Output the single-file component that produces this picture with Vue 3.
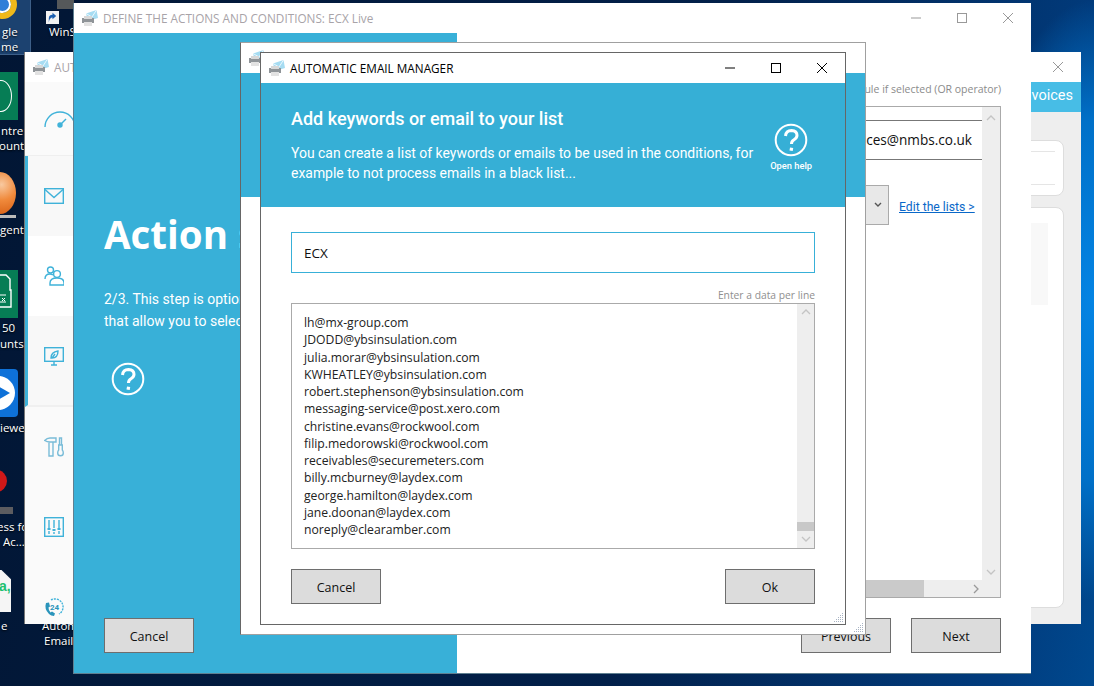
<script setup>
const emails = [
  "lh@mx-group.com",
  "JDODD@ybsinsulation.com",
  "julia.morar@ybsinsulation.com",
  "KWHEATLEY@ybsinsulation.com",
  "robert.stephenson@ybsinsulation.com",
  "messaging-service@post.xero.com",
  "christine.evans@rockwool.com",
  "filip.medorowski@rockwool.com",
  "receivables@securemeters.com",
  "billy.mcburney@laydex.com",
  "george.hamilton@laydex.com",
  "jane.doonan@laydex.com",
  "noreply@clearamber.com",
]

// desktop shortcuts, the place on the wallpaper is the content
const labels = [
  { text: "gle", x: 2, y: 24 },
  { text: "me", x: 1, y: 39 },
  { text: "WinS", x: 49, y: 24 },
  { text: "ntre", x: 1, y: 123 },
  { text: "ounts", x: -1, y: 138 },
  { text: "gent", x: 0, y: 222 },
  { text: "50", x: 2, y: 320 },
  { text: "unts", x: 0, y: 336 },
  { text: "iewer", x: 0, y: 420 },
  { text: "ess fo", x: -3, y: 519 },
  { text: "Ac...", x: 3, y: 534 },
  { text: "e", x: 1, y: 618 },
  { text: "Autom", x: 42, y: 618 },
  { text: "Email", x: 44, y: 633 },
]
</script>

<template>
  <div class="desktop">
    <!-- wallpaper icons -->
    <div class="deskicon picked"></div>
    <div class="deskicon chrome"></div>
    <div class="deskicon thumb"></div>
    <div class="deskicon shortcut">
      <svg width="13" height="13" viewBox="0 0 14 14"><rect width="14" height="14" fill="#f2f2f2" /><path d="M3 12V8q0-4 4-4V2l4 3.500L7 9V7q-3 0-4 5z" fill="#1c5fb0" /></svg>
    </div>
    <div class="deskicon green one"><i class="ring"></i></div>
    <div class="deskicon orange"></div>
    <div class="deskicon plate"></div>
    <div class="deskicon green two">
      <svg width="18" height="48" viewBox="0 0 18 48"><path d="M-4 5H6l4 4v11h1v17H-4z" fill="none" stroke="#fff" stroke-width="1.400" /><path d="M0 25h6M0 32h6" stroke="#fff" /><path d="M2 28l3 3m0-3l-3 3" stroke="#fff" /></svg>
    </div>
    <div class="deskicon viewer">
      <svg width="18" height="48" viewBox="0 0 18 48"><circle cx="-2" cy="24" r="17" fill="#fff" /><path d="M-4 16l14 8-14 8z" fill="#0e71d8" /></svg>
    </div>
    <div class="deskicon red"></div>
    <div class="deskicon bar"></div>
    <div class="deskicon sheet"><span>a,</span></div>
    <span v-for="l in labels" :key="l.text" class="desklabel" :style="{ left: l.x + 'px', top: l.y + 'px' }">{{ l.text }}</span>

    <!-- back window -->
    <section class="win win-a">
      <header class="titlebar">
        <svg class="appicon" viewBox="0 0 16 16"><use href="#app-icon" /></svg>
        <span class="title-muted clip-a">AUTOMATIC</span>
        <div class="controls">
          <button class="ctl muted"><svg width="12" height="12" viewBox="0 0 12 12"><path d="M1 1l10 10M11 1L1 11" /></svg></button>
        </div>
      </header>
      <div class="a-body">
        <nav class="side">
          <div class="side-item first">
            <svg width="32" height="20" viewBox="0 0 32 20"><path d="M1 18a15 15 0 0 1 30 0" /><path d="M16 16l6-6" /><circle cx="16" cy="16" r="2" fill="#3fb2d9" /></svg>
          </div>
          <div class="side-group">
            <div class="side-item tint">
              <svg width="20" height="16" viewBox="0 0 20 16"><rect x=".7" y=".7" width="18.600" height="14.600" /><path d="M1 1.500l9 8 9-8" /></svg>
            </div>
            <div class="side-item white">
              <svg width="20" height="20" viewBox="0 0 20 20"><circle cx="6.500" cy="4" r="3" /><path d="M1 13q0-5 5-5 1.500 0 3 1" /><circle cx="13" cy="8" r="3.400" /><path d="M6 19v-2q0-5 7-5t7 5v2z" /></svg>
            </div>
            <div class="side-item tint tall">
              <svg width="20" height="19" viewBox="0 0 20 19"><rect x=".7" y=".7" width="18.600" height="13.600" /><path d="M7 18h6M10 15v3M7 11q0-6 7-7 0 7-6 7zM8 11l3-4" /></svg>
            </div>
          </div>
          <div class="side-rest">
            <div class="side-item pale">
              <svg width="20" height="20" viewBox="0 0 20 20"><path d="M.7 3.500Q3 1 6 1h6v4H6Q3 5 .7 3.500zM5 5h4v14H5zM15.500 1h2v7h-2zM14.700 8h3.600v5q1 1 1 3a2.800 2.800 0 0 1-5.600 0q0-2 1-3z" /></svg>
            </div>
            <div class="side-item">
              <svg width="20" height="20" viewBox="0 0 20 20"><rect x=".7" y=".7" width="18.600" height="18.600" /><path d="M5 3v8M10 3v8M15 3v8M5 14v3M10 15v2M15 14v3" /><path d="M3.500 12h3M8.500 13h3M13.500 12h3" stroke-width="2" /></svg>
            </div>
            <div class="side-item">
              <svg width="20" height="20" viewBox="0 0 20 20"><path d="M2 6q-2 6 3 11 2 2 5 2l1-2.500-3-2-1.500 1q-2-2-2-5l1.500-1-1-4z" fill="#2a94bb" stroke="none" /><path d="M7 3a8 8 0 1 1 8 14" stroke-dasharray="2 1" /><text x="6" y="13" class="tf">24</text></svg>
            </div>
          </div>
        </nav>
        <div class="a-main">
          <div class="a-head">invoices</div>
          <div class="a-panels">
            <div class="card small"><i></i><i></i></div>
            <div class="card big"><b></b></div>
          </div>
        </div>
      </div>
    </section>

    <!-- actions window -->
    <section class="win win-b">
      <header class="titlebar">
        <svg class="appicon" viewBox="0 0 16 16"><use href="#app-icon" /></svg>
        <span class="title-muted">DEFINE THE ACTIONS AND CONDITIONS: ECX Live</span>
        <div class="controls">
          <button class="ctl muted"><svg width="12" height="12" viewBox="0 0 12 12"><path d="M1 6h10" /></svg></button>
          <button class="ctl muted"><svg width="12" height="12" viewBox="0 0 12 12"><rect x="1.500" y="1.500" width="9" height="9" /></svg></button>
          <button class="ctl muted"><svg width="12" height="12" viewBox="0 0 12 12"><path d="M1 1l10 10M11 1L1 11" /></svg></button>
        </div>
      </header>
      <div class="b-body">
        <aside class="b-left">
          <h1>Action settings</h1>
          <p>2/3. This step is optional, define the conditions<br />that allow you to select the emails to process</p>
          <svg class="help-big" width="34" height="34" viewBox="0 0 34 34">
            <use href="#help-mark" />
          </svg>
          <button class="btn b-cancel">Cancel</button>
        </aside>
        <div class="b-right">
          <div class="b-note">rule if selected (OR operator)</div>
          <div class="b-box">
            <div class="b-content">
              <div class="b-row">ices@nmbs.co.uk</div>
              <div class="b-select-row">
                <div class="b-select"><svg width="8" height="6" viewBox="0 0 8 6"><path d="M1 1l3 3 3-3" /></svg></div>
                <a class="b-link">Edit the lists &gt;</a>
              </div>
            </div>
            <div class="b-vbar">
              <svg width="10" height="6" viewBox="0 0 10 6"><path d="M1 5l4-4 4 4" /></svg>
              <svg width="10" height="6" viewBox="0 0 10 6"><path d="M1 1l4 4 4-4" /></svg>
            </div>
            <div class="b-hbar">
              <div class="b-hthumb"></div>
              <svg width="6" height="10" viewBox="0 0 6 10"><path d="M1 1l4 4-4 4" /></svg>
            </div>
          </div>
          <div class="b-foot">
            <button class="btn">Previous</button>
            <button class="btn">Next</button>
          </div>
        </div>
      </div>
    </section>

    <!-- window behind the dialog -->
    <section class="win win-c">
      <header class="titlebar">
        <svg class="appicon" viewBox="0 0 16 16"><use href="#app-icon" /></svg>
      </header>
      <div class="c-head"></div>
      <svg class="grip" width="11" height="11" viewBox="0 0 11 11"><use href="#grip" /></svg>
    </section>

    <!-- dialog -->
    <section class="win win-d">
      <header class="titlebar">
        <svg class="appicon" viewBox="0 0 16 16"><use href="#app-icon" /></svg>
        <span class="title-dark">AUTOMATIC EMAIL MANAGER</span>
        <div class="controls">
          <button class="ctl"><svg width="12" height="12" viewBox="0 0 12 12"><path d="M1 6h10" /></svg></button>
          <button class="ctl"><svg width="12" height="12" viewBox="0 0 12 12"><rect x="1.500" y="1.500" width="9" height="9" /></svg></button>
          <button class="ctl"><svg width="12" height="12" viewBox="0 0 12 12"><path d="M1 1l10 10M11 1L1 11" /></svg></button>
        </div>
      </header>
      <div class="d-head">
        <div class="d-copy">
          <h2>Add keywords or email to your list</h2>
          <p>You can create a list of keywords or emails to be used in the conditions, for example to not process emails in a black list...</p>
        </div>
        <div class="d-help">
          <svg width="34" height="34" viewBox="0 0 34 34"><use href="#help-mark" /></svg>
          <span>Open help</span>
        </div>
      </div>
      <div class="d-body">
        <div class="d-input">ECX</div>
        <div class="d-hint">Enter a data per line</div>
        <div class="d-list">
          <div class="d-lines">
            <div v-for="mail in emails" :key="mail">{{ mail }}</div>
          </div>
          <div class="d-scroll">
            <svg width="10" height="6" viewBox="0 0 10 6"><path d="M1 5l4-4 4 4" /></svg>
            <div class="d-thumb"></div>
            <svg width="10" height="6" viewBox="0 0 10 6"><path d="M1 1l4 4 4-4" /></svg>
          </div>
        </div>
        <div class="d-foot">
          <button class="btn">Cancel</button>
          <button class="btn">Ok</button>
        </div>
      </div>
      <svg class="grip" width="11" height="11" viewBox="0 0 11 11"><use href="#grip" /></svg>
    </section>

    <svg width="0" height="0" class="defs">
      <defs>
        <g id="app-icon">
          <path d="M4 3.500L14.500 0 16 8 6 11z" fill="#a6dcf2" />
          <path d="M4 3.500l6 3.500 4.500-7" fill="none" stroke="#f2fbff" stroke-width=".9" />
          <rect x="0" y="8" width="12" height="5" fill="#8f9498" />
          <rect x="2" y="6" width="8" height="3" fill="#d8d8d8" />
          <rect x="2" y="12" width="8" height="4" fill="#e2e2e2" />
        </g>
        <g id="help-mark" fill="none" stroke="#fff">
          <circle cx="17" cy="17" r="15.300" stroke-width="2" />
          <path d="M11.500 13q.5-5.500 6-5.500 5.500.2 5.500 4.800 0 2.700-3 4.400-2.500 1.400-2.500 4.300" stroke-width="3" />
          <path d="M16 24.500l3.200.5-.5 3-3.200-.5z" fill="#fff" stroke="none" />
        </g>
        <g id="grip" fill="#a9b4c4">
          <rect x="9" y="1" width="1" height="1" />
          <rect x="7" y="3" width="1" height="1" /><rect x="9" y="3" width="1" height="1" />
          <rect x="5" y="5" width="1" height="1" /><rect x="7" y="5" width="1" height="1" /><rect x="9" y="5" width="1" height="1" />
          <rect x="3" y="7" width="1" height="1" /><rect x="5" y="7" width="1" height="1" /><rect x="7" y="7" width="1" height="1" /><rect x="9" y="7" width="1" height="1" />
          <rect x="1" y="9" width="1" height="1" /><rect x="3" y="9" width="1" height="1" /><rect x="5" y="9" width="1" height="1" /><rect x="7" y="9" width="1" height="1" /><rect x="9" y="9" width="1" height="1" />
        </g>
      </defs>
    </svg>
  </div>
</template>

<style scoped>
.desktop {
  position: relative;
  width: 1094px;
  height: 686px;
  overflow: hidden;
  font-family: Roboto, "Open Sans", sans-serif;
  background:
    radial-gradient(ellipse 120px 300px at 1094px 300px, #0484e4 0%, #0070c8 60%, rgba(0, 90, 170, 0) 100%),
    linear-gradient(100deg, #021634 0%, #02204a 60%, #013c7e 92%, #00498f 100%);
}
.defs {
  position: absolute;
}

.deskicon {
  position: absolute;
}
.picked {
  left: 0;
  top: 0;
  width: 30px;
  height: 54px;
  border-right: 1px solid #3d5f88;
  border-bottom: 1px solid #3d5f88;
  background: #1c4270;
}
.chrome {
  left: -12px;
  top: -10px;
  width: 29px;
  height: 29px;
  box-sizing: border-box;
  border: 6px solid #f0b91a;
  border-radius: 50%;
  background: #2f7fd8;
  box-shadow: inset 0 0 0 2px #fff;
}
.shortcut {
  left: 46px;
  top: 9px;
  width: 13px;
  height: 13px;
}
.thumb {
  left: 57px;
  top: 0;
  width: 17px;
  height: 9px;
  background: #55585a;
}
.green {
  left: 0;
  width: 18px;
  height: 48px;
  background: #067d55;
}
.green.one {
  top: 72px;
}
.green.two {
  top: 270px;
}
.ring {
  position: absolute;
  left: -10px;
  top: 8px;
  width: 20px;
  height: 30px;
  border: 1.500px solid #fff;
  border-radius: 50%;
}
.orange {
  left: -16px;
  top: 172px;
  width: 32px;
  height: 42px;
  border-radius: 50%;
  background: radial-gradient(circle at 55% 30%, #f8c9a0 0%, #f08a3c 45%, #d45a10 100%);
}
.plate {
  left: 0;
  top: 215px;
  width: 16px;
  height: 3px;
  background: #bbb;
}
.viewer {
  left: 0;
  top: 369px;
  width: 18px;
  height: 48px;
  overflow: hidden;
  border-radius: 0 4px 4px 0;
  background: #0e71d8;
}
.red {
  left: -14px;
  top: 470px;
  width: 21px;
  height: 22px;
  border-radius: 50%;
  background: #d01818;
}
.bar {
  left: 0;
  top: 507px;
  width: 13px;
  height: 7px;
  background: #5c5c60;
}
.sheet {
  left: -8px;
  top: 570px;
  width: 19px;
  height: 42px;
  background: #f5f5f5;
  clip-path: polygon(0 0, 50% 0, 100% 22%, 100% 100%, 0 100%);
}
.sheet span {
  position: absolute;
  left: 7px;
  top: 8px;
  color: #20c070;
  font: bold 14px "Liberation Sans", sans-serif;
}
.desklabel {
  position: absolute;
  color: #fff;
  font: 11.500px/16px "Open Sans", sans-serif;
  white-space: nowrap;
  text-shadow: 0 1px 2px #000;
}

.win {
  position: absolute;
  display: flex;
  flex-direction: column;
  overflow: hidden;
  box-sizing: border-box;
  background: #fff;
}
.win-a {
  left: 24px;
  top: 52px;
  width: 1057px;
  height: 572px;
  border-left: 1px solid #777;
}
.win-b {
  left: 73px;
  top: 3px;
  width: 958px;
  height: 671px;
  border-left: 1px solid #5f7f90;
  border-bottom: 1px solid #5f7f90;
}
.win-c {
  left: 240px;
  top: 42px;
  width: 626px;
  height: 593px;
  border: 1px solid #a0a0a0;
  border-left-color: #666;
}
.win-d {
  left: 260px;
  top: 52px;
  width: 586px;
  height: 573px;
  border: 1px solid #666;
}

.titlebar {
  display: flex;
  flex: 0 0 30px;
  align-items: center;
  padding-left: 8px;
  background: #fff;
}
.appicon {
  flex: none;
  width: 16px;
  height: 16px;
  margin-right: 5px;
}
.title-muted,
.title-dark {
  font: 11.750px "Open Sans", sans-serif;
  white-space: nowrap;
}
.title-muted {
  color: #a8a3a8;
}
.title-dark {
  color: #000;
}
.controls {
  display: flex;
  margin-left: auto;
}
.ctl {
  display: flex;
  align-items: center;
  justify-content: center;
  width: 46px;
  height: 30px;
  padding: 0;
  border: 0;
  background: none;
}
.ctl svg {
  fill: none;
  stroke: #000;
  stroke-width: 1;
}
.ctl.muted svg {
  stroke: #999;
}

/* window A */
.a-body {
  display: flex;
  flex: 1;
  min-height: 0;
}
.side {
  display: flex;
  flex: 0 0 49px;
  flex-direction: column;
  background: #fafafa;
}
.side svg {
  fill: none;
  stroke: #3fb2d9;
  stroke-width: 1.400;
}
.side-item {
  display: flex;
  flex: none;
  align-items: center;
  height: 80px;
  padding-left: 19px;
}
.side-item.first {
  height: 73px;
  border-bottom: 1px solid #efefef;
}
.side-group {
  flex: none;
  border-left: 3px solid #3fb2d9;
  border-bottom: 2px solid #f0f0f0;
}
.side-group .side-item {
  padding-left: 16px;
}
.side-item.tint {
  background: #f8f8f8;
}
.side-item.white {
  background: #fff;
}
.side-item.tall {
  height: 89px;
  align-items: flex-start;
  padding-top: 31px;
  box-sizing: border-box;
}
.side-rest {
  flex: none;
}
.side-item.pale svg {
  stroke: #79bcd8;
}
.tf {
  fill: #2a94bb;
  stroke: none;
  font: bold 8px Roboto, sans-serif;
}
.a-main {
  display: flex;
  flex: 1;
  flex-direction: column;
}
.a-head {
  flex: 0 0 30px;
  padding-right: 8px;
  background: #47bde6;
  color: #fff;
  font-size: 14.500px;
  line-height: 27px;
  text-align: right;
}
.a-panels {
  display: flex;
  flex: 1;
  flex-direction: column;
  gap: 11px;
  padding: 28px 17px 16px 0;
  background: #eeeeee;
}
.card {
  position: relative;
  box-sizing: border-box;
  border: 1px solid #ddd;
  border-radius: 0 8px 8px 0;
  background: #fff;
}
.card.small {
  flex: 0 0 56px;
  padding-top: 10px;
}
.card.small i {
  display: block;
  height: 1px;
  margin: 0 8px 32px 0;
  background: #e5e5e5;
}
.card.small i:last-child {
  margin-bottom: 0;
}
.card.big {
  flex: 1;
  padding: 15px 15px 0 0;
}
.card.big b {
  display: block;
  height: 82px;
  background: #f8f8f8;
}

/* window B */
.b-body {
  display: flex;
  flex: 1;
  min-height: 0;
}
.b-left {
  display: flex;
  flex: 0 0 383px;
  flex-direction: column;
  box-sizing: border-box;
  padding: 0 30px 20px;
  background: #38b0d8;
  color: #fff;
}
/* the dialog covers the rest of these lines */
.b-left h1,
.b-left p {
  width: 137px;
  overflow: hidden;
  white-space: nowrap;
}
.b-left h1 {
  margin: 174px 0 0;
  font: bold 38.500px/54px "Open Sans", sans-serif;
}
.b-left p {
  margin: 27px 0 0;
  font: 14px/22px Roboto, sans-serif;
}
.help-big {
  margin: 30px 0 0 7px;
}
.b-cancel {
  margin-top: auto;
}
.btn {
  width: 90px;
  height: 35px;
  box-sizing: border-box;
  padding: 1px 0 0;
  border: 1px solid #6e6e6e;
  background: #dcdcdc;
  color: #111;
  font: 12.500px "Open Sans", sans-serif;
}
.b-right {
  display: flex;
  flex: 1;
  flex-direction: column;
  min-width: 0;
  padding: 47px 30px 20px 0;
}
.b-note {
  height: 18px;
  color: #8b8b8b;
  font: 10.500px/18px "Open Sans", sans-serif;
  text-align: right;
}
.b-box {
  display: grid;
  flex: 1;
  grid-template-columns: 1fr 18px;
  grid-template-rows: 1fr 17px;
  margin-top: 8px;
  border: 1px solid #aaa;
}
.b-content {
  min-width: 0;
  padding-top: 13px;
}
.b-row {
  height: 40px;
  box-sizing: border-box;
  padding-right: 10px;
  border-top: 1px solid #777;
  border-bottom: 1px solid #777;
  color: #111;
  font: 13.600px/38px "Open Sans", sans-serif;
  text-align: right;
}
.b-select-row {
  display: flex;
  align-items: center;
  gap: 10px;
  margin-top: 25px;
  padding-left: 61px;
}
.b-select {
  display: flex;
  align-items: center;
  justify-content: flex-end;
  width: 370px;
  height: 40px;
  box-sizing: border-box;
  padding-right: 6px;
  border: 1px solid #aaa;
  background: #e8e8e8;
}
.b-select svg {
  fill: none;
  stroke: #555;
  stroke-width: 1.400;
}
.b-link {
  margin-top: 3px;
  color: #0a68c8;
  font: 12.200px Roboto, sans-serif;
  text-decoration: underline;
}
.b-vbar {
  display: flex;
  flex-direction: column;
  align-items: center;
  justify-content: space-between;
  padding: 8px 0 5px;
  background: #eeeeee;
}
.b-vbar svg,
.b-hbar svg,
.d-scroll svg {
  fill: none;
  stroke: #c4c4c4;
  stroke-width: 1.300;
}
.b-hbar {
  display: flex;
  grid-column: 1 / 3;
  align-items: center;
  background: #eeeeee;
}
.b-hbar svg {
  margin-left: 49px;
  stroke: #999;
}
.b-hthumb {
  width: 466px;
  height: 100%;
  background: #cacaca;
}
.b-foot {
  display: flex;
  justify-content: flex-end;
  gap: 20px;
  margin-top: 20px;
}

/* window C */
.c-head {
  flex: 0 0 124px;
  background: #38b0d8;
}
.grip {
  position: absolute;
  right: 1px;
  bottom: 1px;
}

/* dialog */
.d-head {
  display: flex;
  flex: 0 0 124px;
  box-sizing: border-box;
  padding: 25px 33px 0 30px;
  background: #36afd6;
  color: #fff;
}
.d-copy {
  flex: 1;
  max-width: 480px;
}
.d-head h2 {
  margin: 0;
  font: 500 18px/22px Roboto, sans-serif;
}
.d-head p {
  margin: 13px 0 0;
  font: 13.950px/20px Roboto, sans-serif;
}
.d-help {
  display: flex;
  flex-direction: column;
  align-items: center;
  margin-left: auto;
  padding-top: 15px;
}
.d-help span {
  margin-top: 2px;
  font: 500 9.300px/14px Roboto, sans-serif;
  white-space: nowrap;
}
.d-body {
  display: flex;
  flex: 1;
  flex-direction: column;
  padding: 25px 30px 0 30px;
}
.d-input {
  height: 41px;
  box-sizing: border-box;
  padding-left: 12px;
  border: 1px solid #38b0d8;
  color: #111;
  font: 13.500px/40px "Open Sans", sans-serif;
}
.d-hint {
  margin-top: 14px;
  color: #8f8f8f;
  font: 10.300px/16px "Open Sans", sans-serif;
  text-align: right;
}
.d-list {
  display: flex;
  height: 246px;
  box-sizing: border-box;
  border: 1px solid #aaa;
}
.d-lines {
  flex: 1;
  padding: 10px 12px 0;
  color: #222;
  font: 12.200px/17.250px "Open Sans", sans-serif;
}
.d-scroll {
  position: relative;
  display: flex;
  flex: 0 0 17px;
  flex-direction: column;
  align-items: center;
  justify-content: space-between;
  padding: 5px 0 6px;
  background: #eeeeee;
}
.d-thumb {
  position: absolute;
  left: 0;
  top: 218px;
  width: 100%;
  height: 9px;
  background: #c8c8c8;
}
.d-foot {
  display: flex;
  justify-content: space-between;
  margin-top: 20px;
}
</style>

<style>
html,
body {
  margin: 0;
  overflow: hidden;
}
</style>
